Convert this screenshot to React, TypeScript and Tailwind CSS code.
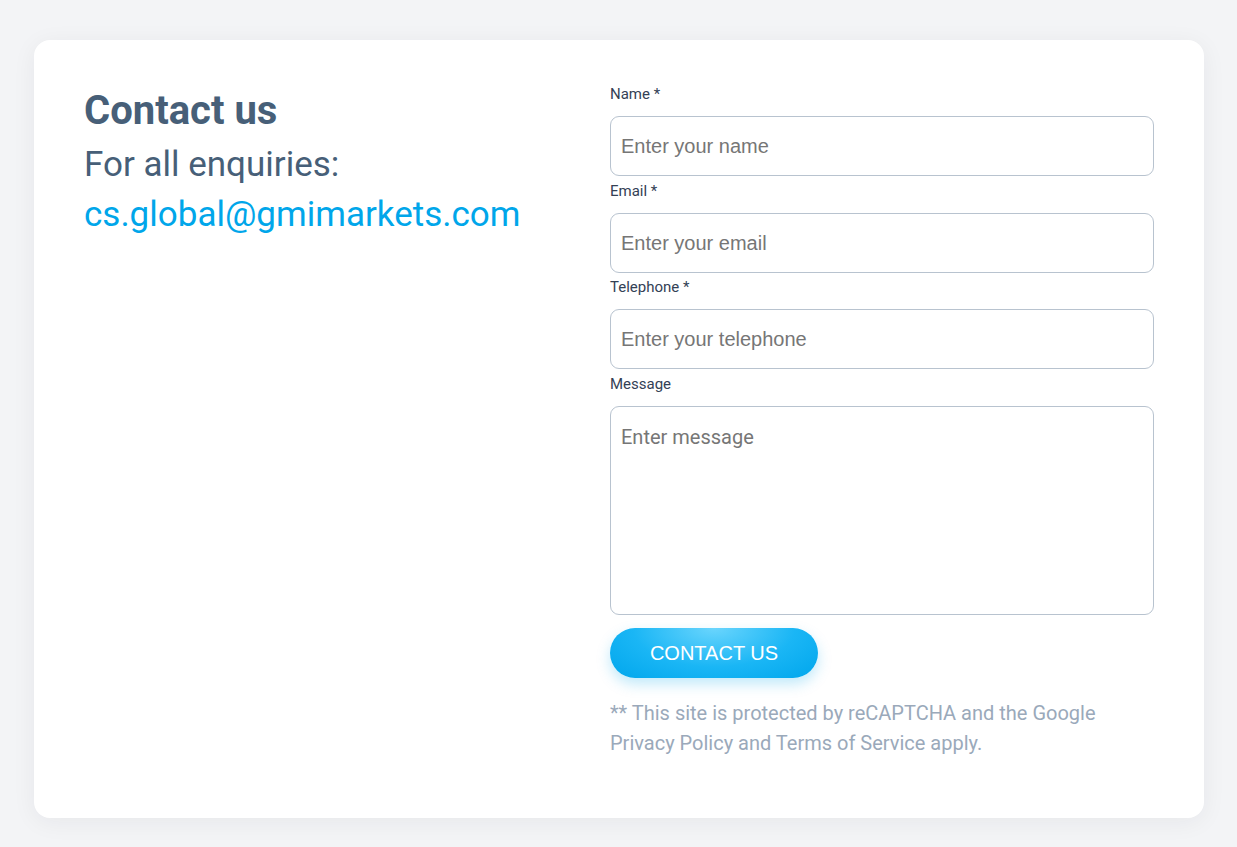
import React from 'react';

const fieldLabel = "block text-[15px] leading-[20px] text-[#334155] mb-[12px] font-['Roboto',sans-serif]";
const inputBox =
  "block w-full h-[60px] rounded-[9px] border border-[#b8c3cf] bg-white px-[10px] text-[20px] text-[#333] placeholder:text-[#767676] font-['Liberation_Sans',Arial,sans-serif] outline-none";

export default function App() {
  return (
    <main className="min-h-screen bg-[#f3f4f6] pt-[40px] pb-[29px] pl-[34px] font-['Roboto',sans-serif]">
      <div className="w-[1170px] bg-white rounded-[16px] shadow-[0_4px_24px_rgba(30,41,59,0.06)] h-[778px] pl-[50px] pr-[50px] pt-[44px] flex">
        <div className="flex-1 pt-[3px]">
          <h1 className="text-[40px] leading-[48px] font-bold text-[#475f78]">Contact us</h1>
          <p className="mt-[5px] text-[35px] leading-[50px] text-[#475f78]">For all enquiries:</p>
          <a href="#" className="block text-[35px] leading-[50px] text-[#00a6ea]">
            cs.global@gmimarkets.com
          </a>
        </div>

        <form className="w-[544px]" onSubmit={(e) => e.preventDefault()}>
          <label className={fieldLabel}>Name *</label>
          <input className={inputBox + " mb-[5px]"} placeholder="Enter your name" />

          <label className={fieldLabel}>Email *</label>
          <input className={inputBox + " mb-[4px]"} placeholder="Enter your email" />

          <label className={fieldLabel}>Telephone *</label>
          <input className={inputBox + " mb-[5px]"} placeholder="Enter your telephone" />

          <label className={fieldLabel}>Message</label>
          <textarea
            className="block w-full h-[209px] resize-none rounded-[9px] border border-[#b8c3cf] bg-white px-[10px] py-[16px] text-[20px] leading-[28px] text-[#333] placeholder:text-[#767676] font-['Roboto',sans-serif] outline-none"
            placeholder="Enter message"
          />

          <button
            type="submit"
            className="mt-[13px] w-[208px] h-[50px] rounded-full bg-[radial-gradient(ellipse_at_50%_0%,#6ad5fd_0%,#1ab6f5_55%,#00a6ec_100%)] text-white text-[20px] font-['Liberation_Sans',Arial,sans-serif] shadow-[0_6px_14px_rgba(0,166,236,0.25)]"
          >
            CONTACT US
          </button>

          <p className="mt-[20px] text-[20px] leading-[30px] text-[#9aa9ba]">
            ** This site is protected by reCAPTCHA and the Google
            <br />
            Privacy Policy and Terms of Service apply.
          </p>
        </form>
      </div>
    </main>
  );
}
